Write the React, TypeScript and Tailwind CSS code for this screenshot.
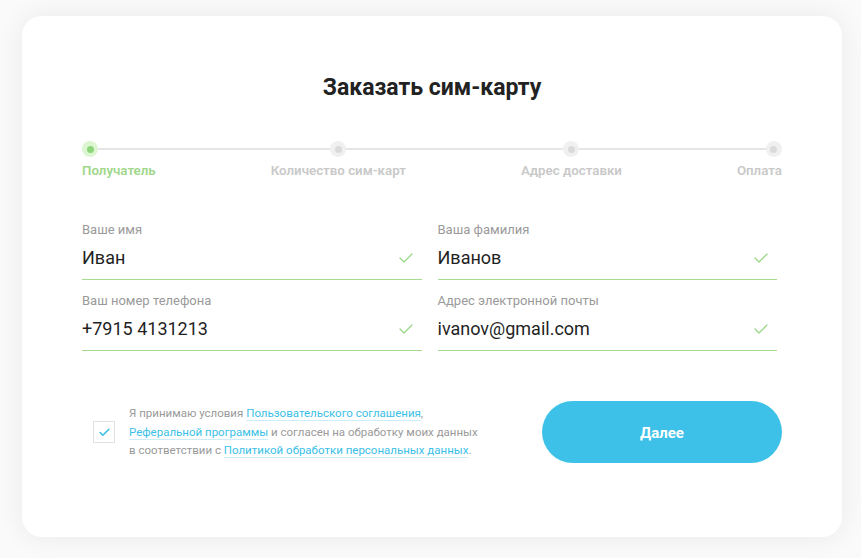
import { Check } from "lucide-react";

const steps = [
  { label: "Получатель", active: true, align: "items-start" },
  { label: "Количество сим-карт", active: false, align: "items-center" },
  { label: "Адрес доставки", active: false, align: "items-center" },
  { label: "Оплата", active: false, align: "items-end" },
];

const fields = [
  { label: "Ваше имя", value: "Иван" },
  { label: "Ваша фамилия", value: "Иванов" },
  { label: "Ваш номер телефона", value: "+7915 4131213" },
  { label: "Адрес электронной почты", value: "ivanov@gmail.com" },
];

const link = "text-[#3bbfe6] underline decoration-[#cdeef8] underline-offset-[3px]";

function InputCheck() {
  return (
    <svg width="14" height="10" viewBox="0 0 14 10" fill="none" className="shrink-0">
      <path d="M1 5l4 4 8-8" stroke="#9ad787" strokeWidth="1.3" strokeLinecap="round" strokeLinejoin="round" />
    </svg>
  );
}

function Stepper() {
  return (
    <div className="relative flex justify-between">
      <div className="absolute left-[8px] right-[8px] top-[7px] h-[2px] bg-[#e6e6e6]" />
      {steps.map((s) => (
        <div key={s.label} className={`relative flex flex-col ${s.align}`}>
          <div
            className={`w-4 h-4 rounded-full flex items-center justify-center ${
              s.active ? "bg-[#dcf6d2]" : "bg-[#f0f0f0]"
            }`}
          >
            <div className={`w-[7px] h-[7px] rounded-full ${s.active ? "bg-[#8ed47a]" : "bg-[#dadada]"}`} />
          </div>
          <span
            className={`mt-[6px] text-[13.3px] leading-4 font-semibold ${
              s.active ? "text-[#9fd88a]" : "text-[#c9c9c9]"
            }`}
          >
            {s.label}
          </span>
        </div>
      ))}
    </div>
  );
}

function Field({ label, value }: { label: string; value: string }) {
  return (
    <div className="flex flex-col">
      <span className="text-[13px] leading-4 text-[#9a9a9a]">{label}</span>
      <div className="mt-2 flex items-center justify-between border-b border-[#a6dc90] pb-[9px] pr-[9px]">
        <span className="text-[18px] leading-6 text-[#1f1f1f]">{value}</span>
        <InputCheck />
      </div>
    </div>
  );
}

export default function App() {
  return (
    <div
      className="w-[861px] h-[558px] bg-[#fafafa] pt-4 px-[22px]"
      style={{ fontFamily: "Roboto, 'Noto Sans', sans-serif" }}
    >
      <div className="w-[820px] h-[521px] bg-white rounded-[20px] shadow-[0_0_28px_rgba(0,0,0,0.07)] pt-[56px] px-[60px]">
        <h1 className="text-center text-[23px] leading-8 font-bold text-[#222]">Заказать сим-карту</h1>

        <div className="mt-[37px]">
          <Stepper />
        </div>

        <div className="mt-[43px] w-[695px] grid grid-cols-2 gap-x-4 gap-y-[13px]">
          {fields.map((f) => (
            <Field key={f.label} label={f.label} value={f.value} />
          ))}
        </div>

        <div className="mt-[50px] flex items-center justify-between">
          <div className="flex items-center ml-[11px]">
            <div className="w-[22px] h-[22px] border border-[#e2e2e2] flex items-center justify-center">
              <Check size={13} strokeWidth={3} className="text-[#3bbfe6]" />
            </div>
            <div className="ml-[14px] text-[11.5px] leading-[18.5px] text-[#9a9a9a] whitespace-nowrap">
              <div>
                Я принимаю условия <a className={link}>Пользовательского соглашения</a>,
              </div>
              <div>
                <a className={link}>Реферальной программы</a> и согласен на обработку моих данных
              </div>
              <div>
                в соответствии с <a className={link}>Политикой обработки персональных данных</a>.
              </div>
            </div>
          </div>
          <button className="w-[240px] h-[62px] rounded-full bg-[#3ec1e8] text-white text-[15px] font-bold pt-[3px]">
            Далее
          </button>
        </div>
      </div>
    </div>
  );
}
